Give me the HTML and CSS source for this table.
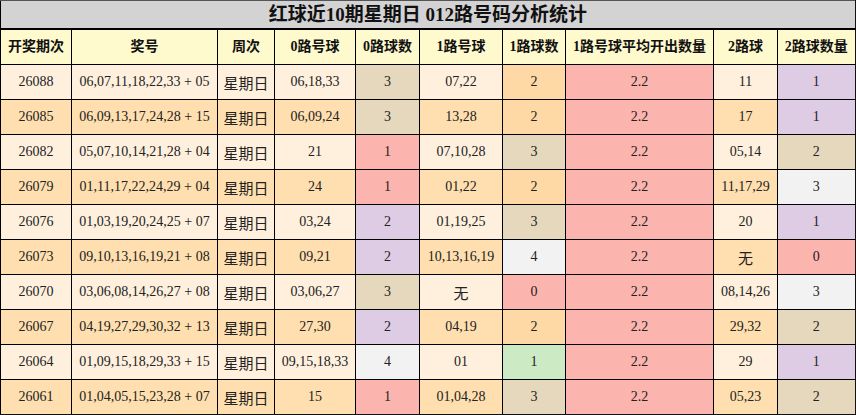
FILE: index.html
```html
<!DOCTYPE html>
<html lang="zh">
<head>
<meta charset="utf-8">
<link rel="stylesheet" href="styles.css">
</head>
<body>
<table class="stats">
<colgroup>
<col class="c1"><col class="c2"><col class="c3"><col class="c4"><col class="c5"><col class="c6"><col class="c7"><col class="c8"><col class="c9"><col class="c10">
</colgroup>
<thead>
<tr class="title"><th colspan="10">红球近10期星期日 012路号码分析统计</th></tr>
<tr class="head"><th>开奖期次</th><th>奖号</th><th>周次</th><th>0路号球</th><th>0路球数</th><th>1路号球</th><th>1路球数</th><th>1路号球平均开出数量</th><th>2路球</th><th>2路球数量</th></tr>
</thead>
<tbody>
<tr class="odd"><td>26088</td><td>06,07,11,18,22,33 + 05</td><td class="cn">星期日</td><td>06,18,33</td><td class="tan">3</td><td>07,22</td><td class="org">2</td><td class="pnk">2.2</td><td>11</td><td class="pur">1</td></tr>
<tr class="even"><td>26085</td><td>06,09,13,17,24,28 + 15</td><td class="cn">星期日</td><td>06,09,24</td><td class="tan">3</td><td>13,28</td><td class="org">2</td><td class="pnk">2.2</td><td>17</td><td class="pur">1</td></tr>
<tr class="odd"><td>26082</td><td>05,07,10,14,21,28 + 04</td><td class="cn">星期日</td><td>21</td><td class="pnk">1</td><td>07,10,28</td><td class="tan">3</td><td class="pnk">2.2</td><td>05,14</td><td class="tan">2</td></tr>
<tr class="even"><td>26079</td><td>01,11,17,22,24,29 + 04</td><td class="cn">星期日</td><td>24</td><td class="pnk">1</td><td>01,22</td><td class="org">2</td><td class="pnk">2.2</td><td>11,17,29</td><td class="gry">3</td></tr>
<tr class="odd"><td>26076</td><td>01,03,19,20,24,25 + 07</td><td class="cn">星期日</td><td>03,24</td><td class="pur">2</td><td>01,19,25</td><td class="tan">3</td><td class="pnk">2.2</td><td>20</td><td class="pur">1</td></tr>
<tr class="even"><td>26073</td><td>09,10,13,16,19,21 + 08</td><td class="cn">星期日</td><td>09,21</td><td class="pur">2</td><td>10,13,16,19</td><td class="gry">4</td><td class="pnk">2.2</td><td class="cn">无</td><td class="pnk">0</td></tr>
<tr class="odd"><td>26070</td><td>03,06,08,14,26,27 + 08</td><td class="cn">星期日</td><td>03,06,27</td><td class="tan">3</td><td class="cn">无</td><td class="pnk">0</td><td class="pnk">2.2</td><td>08,14,26</td><td class="gry">3</td></tr>
<tr class="even"><td>26067</td><td>04,19,27,29,30,32 + 13</td><td class="cn">星期日</td><td>27,30</td><td class="pur">2</td><td>04,19</td><td class="org">2</td><td class="pnk">2.2</td><td>29,32</td><td class="tan">2</td></tr>
<tr class="odd"><td>26064</td><td>01,09,15,18,29,33 + 15</td><td class="cn">星期日</td><td>09,15,18,33</td><td class="gry">4</td><td>01</td><td class="grn">1</td><td class="pnk">2.2</td><td>29</td><td class="pur">1</td></tr>
<tr class="even"><td>26061</td><td>01,04,05,15,23,28 + 07</td><td class="cn">星期日</td><td>15</td><td class="pnk">1</td><td>01,04,28</td><td class="tan">3</td><td class="pnk">2.2</td><td>05,23</td><td class="tan">2</td></tr>
</tbody>
</table>
</body>
</html>
```

FILE: styles.css
```css
html, body {
  margin: 0;
  padding: 0;
  background: #ffffff;
}

.stats {
  width: 856px;
  table-layout: fixed;
  border-collapse: collapse;
  font-family: "Liberation Serif", "Noto Sans CJK SC", serif;
  font-size: 14px;
  line-height: 16px;
  color: #222;
  border: 2px solid #111;
  border-top: 1px solid #555;
  border-left: 1px solid #333;
}

.c1 { width: 71px; }
.c2 { width: 146px; }
.c3 { width: 57px; }
.c4 { width: 81px; }
.c5 { width: 64px; }
.c6 { width: 83px; }
.c7 { width: 63px; }
.c8 { width: 148px; }
.c9 { width: 64px; }
.c10 { width: 78px; }

.stats th,
.stats td {
  border: 1px solid #000;
  padding: 0;
  text-align: center;
  white-space: nowrap;
  overflow: hidden;
}

.title th {
  height: 27px;
  background: #d3d3d3;
  font-size: 19px;
  line-height: 22px;
  font-weight: bold;
  color: #111;
  border-bottom: 2px solid #000;
  border-top: 1px solid #555;
}

.head th {
  height: 34px;
  background: #fffacd;
  font-size: 14px;
  font-weight: bold;
  color: #111;
}

.stats td {
  height: 34px;
}

.odd td { background: #fff0de; }
.even td { background: #ffdfaf; }

.stats td.cn {
  font-family: "Noto Sans CJK SC", sans-serif;
  font-size: 15px;
  line-height: 16px;
  padding-top: 2px;
  height: 32px;
}

.stats td.tan { background: #e5d8bd; }
.stats td.pnk { background: #fbb4ae; }
.stats td.pur { background: #decbe4; }
.stats td.org { background: #fed9a6; }
.stats td.gry { background: #f2f2f2; }
.stats td.grn { background: #ccebc5; }
```
